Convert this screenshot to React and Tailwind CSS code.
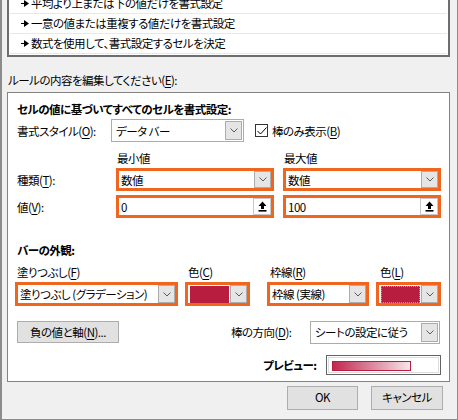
import React from 'react';

const ORANGE = 'border-[#f0661f]';

// underlined access key
function U({ children }) {
  return <span className="underline underline-offset-2">{children}</span>;
}

function Chevron() {
  return (
    <svg width="8" height="5" viewBox="0 0 8 5" className="block">
      <path d="M0.5 0.5 L4 4 L7.5 0.5" fill="none" stroke="#5a5a5a" strokeWidth="1" />
    </svg>
  );
}

function DropBtn({ className = '' }) {
  return (
    <div className={`w-[17px] shrink-0 bg-[#e5e5e5] border border-[#acacac] flex items-center justify-center ${className}`}>
      <Chevron />
    </div>
  );
}

function UpArrow() {
  return (
    <svg width="9" height="11" viewBox="0 0 9 11" className="block">
      <path d="M4.5 0.5 L8.5 5 L6 5 L6 8 L3 8 L3 5 L0.5 5 Z" fill="#000" />
      <rect x="0.5" y="9" width="8" height="1.6" fill="#000" />
    </svg>
  );
}

function Marker() {
  return (
    <svg width="8" height="7" viewBox="0 0 8 7" className="block">
      <rect x="0" y="3" width="4" height="1" fill="#000" />
      <path d="M3 0 L8 3.5 L3 7 Z" fill="#000" />
    </svg>
  );
}

function OrangeCombo({ text }) {
  return (
    <div className={`w-[158px] h-[23px] border-[3px] ${ORANGE} bg-white flex`}>
      <div className="flex-1 pl-[2px] flex items-center">{text}</div>
      <DropBtn />
    </div>
  );
}

function OrangeInput({ text }) {
  return (
    <div className={`w-[158px] h-[23px] border-[3px] ${ORANGE} bg-white flex`}>
      <div className="flex-1 pl-[2px] flex items-center">{text}</div>
      <div className="w-[18px] border border-[#c8c8c8] bg-white flex items-center justify-center">
        <UpArrow />
      </div>
    </div>
  );
}

function ColorCombo({ focus }) {
  return (
    <div className={`w-[65px] h-[24px] border-[3px] ${ORANGE} bg-white flex`}>
      <div className="flex-1 pl-[2px] pt-[1px] pr-[1px] flex">
        <div className={`flex-1 bg-[#b81d40] ${focus ? 'border border-dotted border-[#2fd3c8]' : ''}`} />
      </div>
      <DropBtn />
    </div>
  );
}

const listItems = [
  '平均より上または下の値だけを書式設定',
  '一意の値または重複する値だけを書式設定',
  '数式を使用して、書式設定するセルを決定',
];

export default function App() {
  return (
    <div
      className="w-[458px] h-[420px] bg-[#f0f0f0] border-l-2 border-r border-b border-[#8c8c8c] pl-[5px] text-[11.5px] tracking-[-0.5px] text-black whitespace-nowrap overflow-hidden [font-feature-settings:'palt'] font-['Noto_Sans_CJK_JP','Noto_Sans',sans-serif]"
    >
      {/* rule type list (scrolled) */}
      <div className="w-[443px] h-[57px] border-x-2 border-b-2 border-[#6d6d6d] bg-white overflow-hidden">
        <div className="-mt-[6px]">
          {listItems.map((t, i) => (
            <div key={i} className="h-[20px] border-b border-[#e8e8e8] flex items-center mx-[1px]">
              <div className="w-[21px] pl-[11px]">
                <Marker />
              </div>
              <span className="leading-none">{t}</span>
            </div>
          ))}
        </div>
      </div>

      <div className="mt-[15px] h-[16px] leading-[16px] pl-[1px]">
        ルールの内容を編集してください(<U>E</U>):
      </div>

      {/* rule description panel */}
      <div className="mt-[4px] w-[443px] h-[290px] border border-[#838383] bg-white pl-[9px] leading-[16px] flex flex-col">
        <div className="mt-[8px] h-[16px] font-bold">セルの値に基づいてすべてのセルを書式設定:</div>

        <div className="mt-[2px] h-[23px] flex items-center">
          <div className="w-[94px]">書式スタイル(<U>O</U>):</div>
          <div className="w-[133px] h-[23px] border border-[#acacac] bg-white flex p-[1px]">
            <div className="flex-1 pl-[3px] flex items-center">データ バー</div>
            <DropBtn />
          </div>
          <div className="ml-[11px] w-[13px] h-[13px] border border-[#333] flex items-center justify-center">
            <svg width="10" height="8" viewBox="0 0 10 8" className="block">
              <path d="M0.5 4 L3.5 7 L9.5 0.5" fill="none" stroke="#000" strokeWidth="1" />
            </svg>
          </div>
          <div className="ml-[4px]">棒のみ表示(<U>B</U>)</div>
        </div>

        <div className="mt-[8px] h-[16px] flex">
          <div className="w-[100px]" />
          <div className="w-[167px]">最小値</div>
          <div>最大値</div>
        </div>

        <div className="mt-[2px] h-[23px] flex items-center">
          <div className="w-[99px]">種類(<U>T</U>):</div>
          <OrangeCombo text="数値" />
          <div className="w-[9px]" />
          <OrangeCombo text="数値" />
        </div>

        <div className="mt-[4px] h-[23px] flex items-center">
          <div className="w-[99px]">値(<U>V</U>):</div>
          <OrangeInput text="0" />
          <div className="w-[9px]" />
          <OrangeInput text="100" />
        </div>

        <div className="mt-[24px] h-[16px] font-bold">バーの外観:</div>

        <div className="mt-[6px] h-[16px] flex">
          <div className="w-[171px]">塗りつぶし(<U>F</U>)</div>
          <div className="w-[82px]">色(<U>C</U>)</div>
          <div className="w-[110px]">枠線(<U>R</U>)</div>
          <div>色(<U>L</U>)</div>
        </div>

        <div className="mt-[2px] h-[24px] flex -ml-[2px]">
          <div className={`w-[163px] h-[24px] border-[3px] ${ORANGE} bg-white flex`}>
            <div className="flex-1 pl-[2px] flex items-center overflow-hidden">塗りつぶし (グラデーション)</div>
            <DropBtn />
          </div>
          <div className="w-[7px]" />
          <ColorCombo />
          <div className="w-[17px]" />
          <div className={`w-[102px] h-[24px] border-[3px] ${ORANGE} bg-white flex`}>
            <div className="flex-1 pl-[2px] flex items-center">枠線 (実線)</div>
            <DropBtn />
          </div>
          <div className="w-[7px]" />
          <ColorCombo focus />
        </div>

        <div className="mt-[15px] h-[22px] flex items-center">
          <div className="w-[102px] h-[22px] bg-[#e1e1e1] border border-[#adadad] flex items-center justify-center">
            負の値と軸(<U>N</U>)...
          </div>
          <div className="ml-[112px] w-[79px]">棒の方向(<U>D</U>):</div>
          <div className="w-[130px] h-[23px] border border-[#acacac] bg-white flex p-[1px]">
            <div className="flex-1 pl-[3px] flex items-center">シートの設定に従う</div>
            <DropBtn />
          </div>
        </div>

        <div className="mt-[12px] h-[19px] flex items-center">
          <div className="ml-[246px] w-[63px] font-semibold">プレビュー:</div>
          <div className="w-[115px] h-[20px] border border-[#646464] bg-white p-[1px]">
            <div className="w-full h-full border border-[#dcdcdc] pl-[3px] pt-[3px]">
              <div className="w-[79px] h-[10px] border border-[#b81d40] bg-[linear-gradient(to_right,#c0284f,#f6e4ea)]" />
            </div>
          </div>
        </div>
      </div>

      {/* dialog buttons */}
      <div className="mt-[4px] flex pl-[280px]">
        <div className="w-[71px] h-[24px] bg-[#e1e1e1] border border-[#adadad] flex items-center justify-center">OK</div>
        <div className="ml-[13px] w-[72px] h-[24px] bg-[#e1e1e1] border border-[#adadad] flex items-center justify-center">キャンセル</div>
      </div>
    </div>
  );
}
